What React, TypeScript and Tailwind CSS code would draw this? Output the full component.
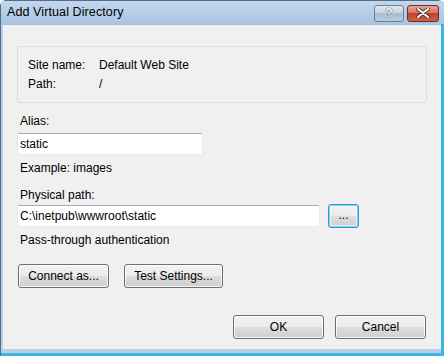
import React from "react";

const font = { fontFamily: '"Liberation Sans", Arial, sans-serif' };

function Btn({ children, w, focused }: { children: React.ReactNode; w: string; focused?: boolean }) {
  return (
    <div
      className={`${w} h-[24px] rounded-[3px] border ${
        focused ? "border-[#3399cc]" : "border-[#707070]"
      } flex items-center justify-center text-[12px] text-black`}
      style={{
        background: "linear-gradient(#f2f2f2 0%, #ebebeb 50%, #dddddd 50%, #cfcfcf 100%)",
        boxShadow: focused
          ? "inset 0 0 0 1px #7fd0f4, inset 0 0 0 2px rgba(255,255,255,0.6)"
          : "inset 0 0 0 1px rgba(255,255,255,0.8)",
      }}
    >
      {children}
    </div>
  );
}

export default function App() {
  return (
    <div className="w-[445px] h-[356px] bg-white overflow-hidden" style={font}>
      <div className="w-[444px] h-[356px] flex flex-col rounded-t-[6px] border-t border-l border-[#4f6f8f] bg-[#b7cfe8]">
        {/* title bar */}
        <div
          className="h-[23px] flex items-center pl-[6px] pr-[4px] shrink-0"
          style={{ background: "linear-gradient(#c3d7ec, #a9c5e2)" }}
        >
          <span className="text-[12.5px] text-black tracking-[0.1px]">Add Virtual Directory</span>
          <div className="ml-auto flex items-center gap-[3px] mt-[1px] mr-[1px]">
            <div
              className="w-[30px] h-[17px] rounded-[3px] border border-[#6a7f96] flex items-center justify-center"
              style={{ background: "linear-gradient(#dfe8f2 0%, #c4d3e3 50%, #a9bcd2 50%, #b8cbe0 100%)" }}
            >
              <span className="text-[12px] font-bold text-white leading-none" style={{ textShadow: "0 0 1px #334, 0 0 1px #334" }}>?</span>
            </div>
            <div
              className="w-[32px] h-[17px] rounded-[3px] border border-[#6d2b26] flex items-center justify-center"
              style={{ background: "linear-gradient(#e5a497 0%, #d3705f 50%, #c2422c 50%, #d0604b 100%)" }}
            >
              <svg width="14" height="10" viewBox="0 0 14 10">
                <path d="M2 1 L12 9 M12 1 L2 9" stroke="#3a2222" strokeWidth="3.6" strokeLinecap="round" />
                <path d="M2 1 L12 9 M12 1 L2 9" stroke="#ffffff" strokeWidth="2.2" strokeLinecap="round" />
              </svg>
            </div>
          </div>
        </div>
        {/* body frame */}
        <div className="flex-1 flex pl-[2px] pb-[4px] border-r-[3px] border-[#3cb4e4]" style={{ borderBottom: "3px solid #3cb4e4" }}>
          <div className="flex-1 bg-[#f0f0f0] border-t border-[#a6bcd3] pl-[14px] pr-[12px] pt-[21px] text-[12px] text-black">
            {/* group box */}
            <div className="w-[410px] h-[57px] rounded-[3px] border border-[#d5dfe5] pl-[10px] pt-[8px]">
              <div className="flex h-[19px] items-center">
                <span className="w-[71px]">Site name:</span>
                <span>Default Web Site</span>
              </div>
              <div className="flex h-[19px] items-center">
                <span className="w-[71px]">Path:</span>
                <span>/</span>
              </div>
            </div>
            <div className="pl-[3px] mt-[10px] h-[16px] leading-[16px]">Alias:</div>
            <div className="mt-[4px] w-[186px] h-[22px] rounded-[2px] border border-[#e3e9ef] border-t-[#abadb3] bg-white flex items-center pl-[2px]">
              static
            </div>
            <div className="pl-[3px] mt-[5px] h-[16px] leading-[16px]">Example: images</div>
            <div className="pl-[3px] mt-[11px] h-[16px] leading-[16px]">Physical path:</div>
            <div className="mt-[1px] flex items-center gap-[8px]">
              <div className="w-[303px] h-[22px] rounded-[2px] border border-[#e3e9ef] border-t-[#abadb3] bg-white flex items-center pl-[2px]">
                C:\inetpub\wwwroot\static
              </div>
              <Btn w="w-[31px]" focused>
                <span className="leading-none -mt-[2px]">...</span>
              </Btn>
            </div>
            <div className="pl-[3px] mt-[4px] h-[16px] leading-[16px]">Pass-through authentication</div>
            <div className="mt-[16px] pl-[1px] flex gap-[15px]">
              <Btn w="w-[91px]">Connect as...</Btn>
              <Btn w="w-[99px]">Test Settings...</Btn>
            </div>
            <div className="mt-[27px] flex justify-end gap-[11px] pr-[3px]">
              <Btn w="w-[91px]">OK</Btn>
              <Btn w="w-[91px]">Cancel</Btn>
            </div>
          </div>
        </div>
      </div>
    </div>
  );
}
